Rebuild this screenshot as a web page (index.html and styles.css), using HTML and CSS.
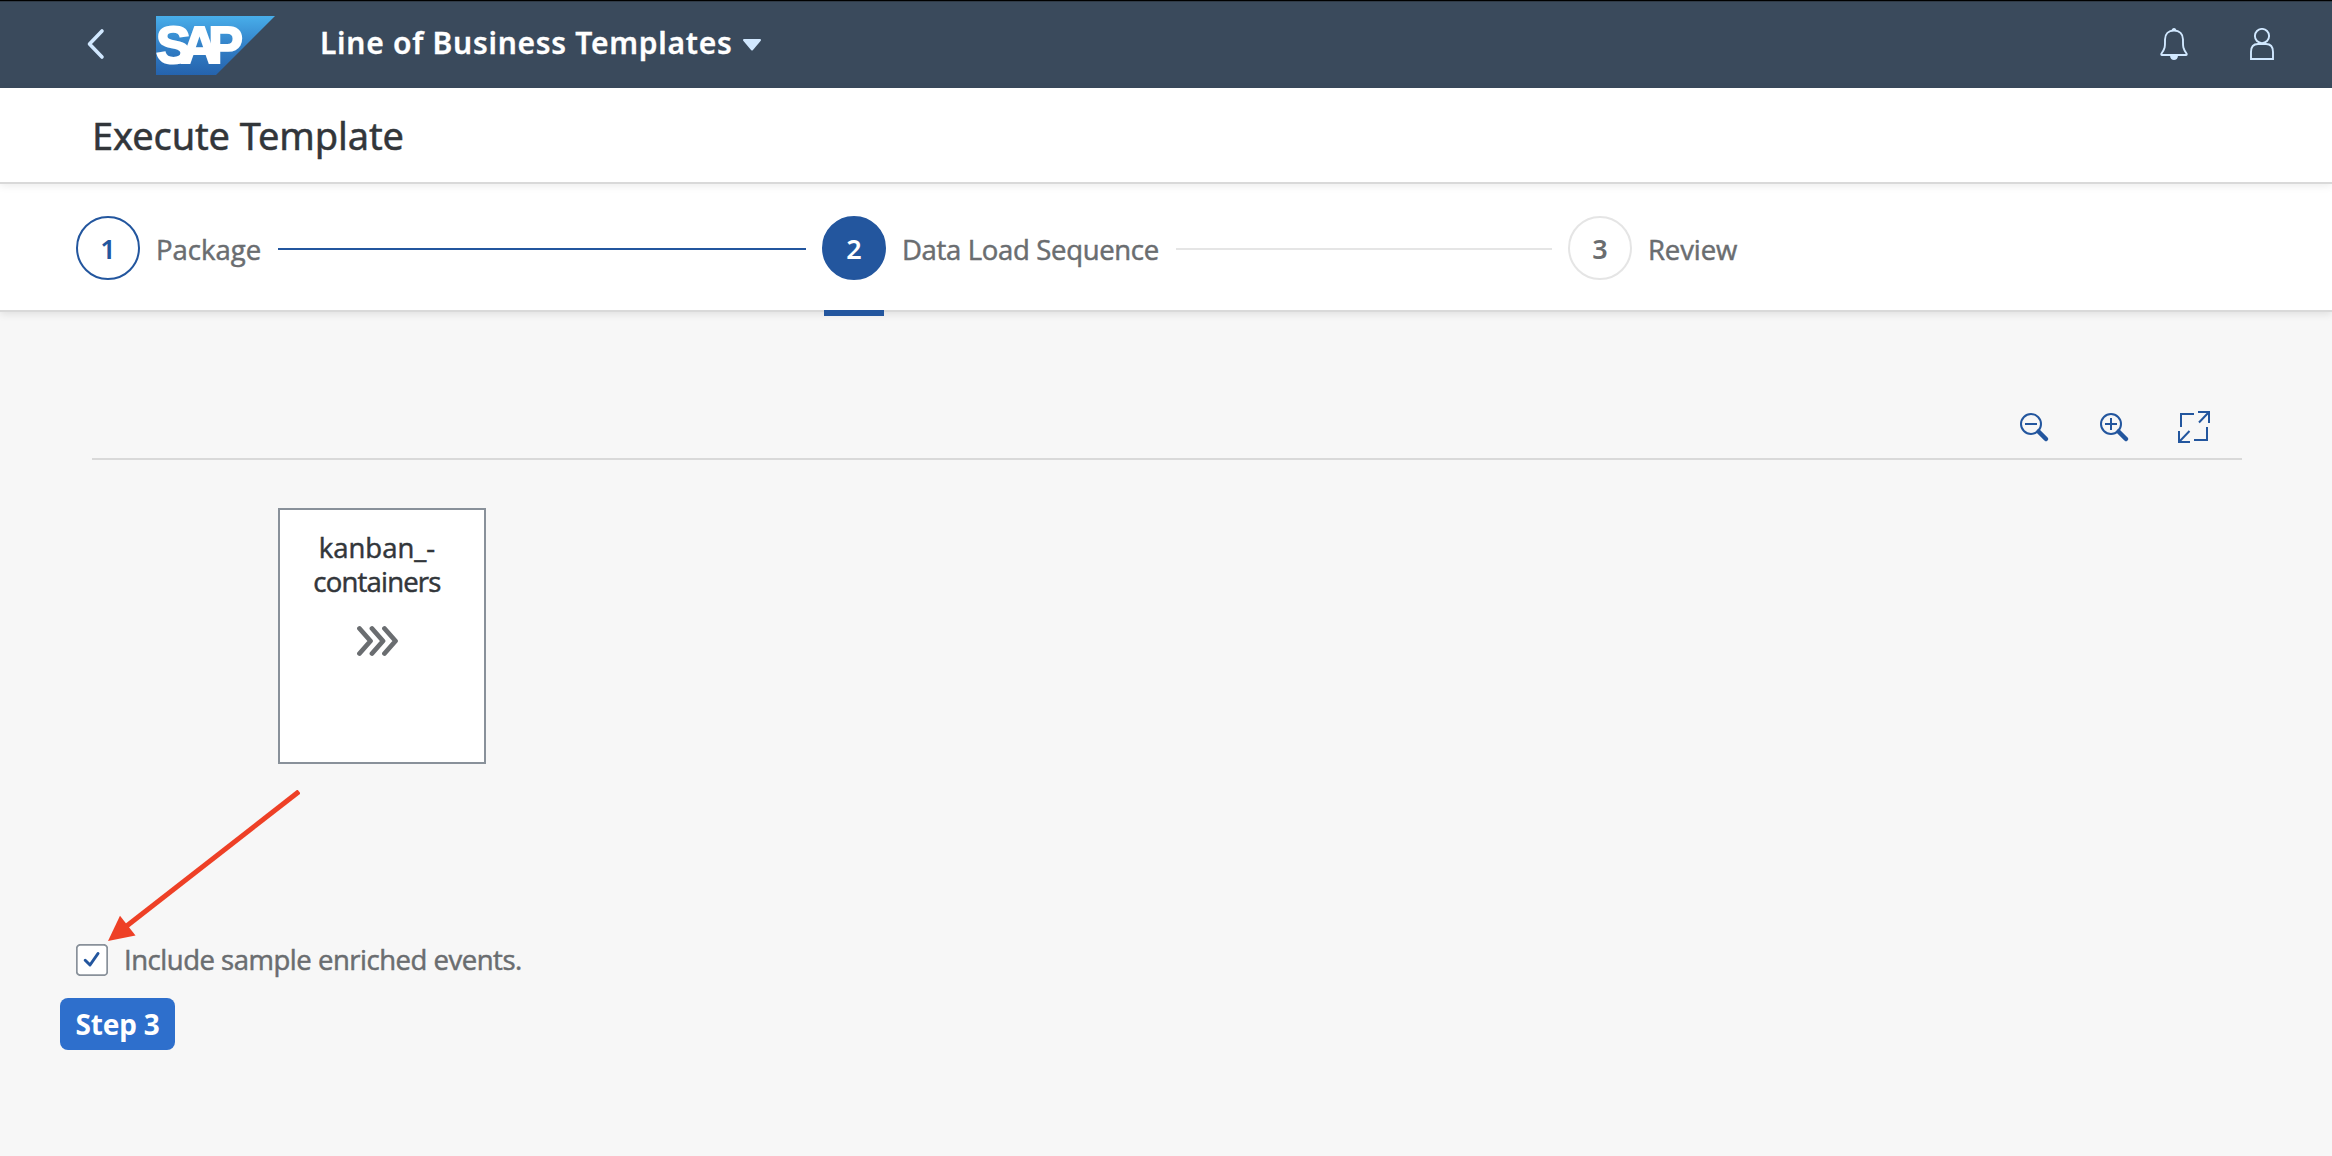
FILE: index.html
```
<!DOCTYPE html>
<html lang="en">
<head>
<meta charset="utf-8">
<title>Line of Business Templates</title>
<link rel="stylesheet" href="styles.css">
</head>
<body>
<header class="shell">
  <svg class="shell-back" width="20" height="32" viewBox="0 0 20 32"><path d="M16 3 L3.5 16 L16 29"/></svg>
  <svg class="shell-logo" width="119" height="59" viewBox="0 0 119 59">
    <defs><linearGradient id="logo" x1="0" y1="0" x2="0" y2="1"><stop offset="0" stop-color="#48aeea"/><stop offset=".5" stop-color="#3381c8"/><stop offset="1" stop-color="#2563ad"/></linearGradient></defs>
    <path d="M0 0H119L60 59H0Z" fill="url(#logo)"/>
    <text x="0" y="47" textLength="87">SAP</text>
  </svg>
  <h1 class="shell-title">Line of Business Templates</h1>
  <svg class="shell-caret" width="20" height="14" viewBox="0 0 20 14"><path d="M2 2H18L10 11.5Z"/></svg>
  <div class="shell-actions">
    <svg width="28" height="32" viewBox="0 0 28 32"><path d="M14 2.5C8.500 2.500 5 6 5 11.500C5 18 5.500 20 1.500 25.500C1 26.500 1.300 27 2 27H26C26.700 27 27 26.500 26.500 25.500C22.500 20 23 18 23 11.500C23 6 19.500 2.500 14 2.500Z"/><path class="solid" d="M10 27.500H18C18 30.500 16 32 14 32S10 30.500 10 27.500ZM11.500 3C11.500 -1 16.500 -1 16.500 3Z"/></svg>
    <svg width="24" height="32" viewBox="0 0 24 32"><circle cx="12" cy="8" r="7.100"/><path d="M1 31V24C1 18.500 4 16 8 16H16C20 16 23 18.500 23 24V31Z"/></svg>
  </div>
</header>
<div class="page-head"><h2>Execute Template</h2></div>
<nav class="wizard">
  <div class="step done"><span class="step-no">1</span><span class="step-label package">Package</span><i class="step-line"></i></div>
  <div class="step current"><span class="step-no">2</span><span class="step-label">Data Load Sequence</span><i class="step-line"></i></div>
  <div class="step"><span class="step-no">3</span><span class="step-label review">Review</span></div>
</nav>
<main class="content">
  <div class="toolbar">
    <svg width="32" height="32" viewBox="0 0 32 32"><circle cx="13" cy="13" r="10"/><path d="M7 13H19"/><path class="handle" d="M20.500 20.500L28 28"/></svg>
    <svg width="32" height="32" viewBox="0 0 32 32"><circle cx="13" cy="13" r="10"/><path d="M7 13H19M13 7V19"/><path class="handle" d="M20.500 20.500L28 28"/></svg>
    <svg width="32" height="32" viewBox="0 0 32 32"><path d="M3 16V3H16M29 16V29H16M20 1H31V12M21 11.500L31 1M1 20V31H12M11.500 20L1 31"/></svg>
  </div>
  <div class="node">
    <div class="node-title"><span>kanban_-</span><span class="tight">containers</span></div>
    <svg width="42" height="32" viewBox="0 0 42 32"><path d="M3.500 3.500L14.500 16L3.500 28.500M16 3.500L27 16L16 28.500M28.500 3.500L39.500 16L28.500 28.500"/></svg>
  </div>
  <label class="option">
    <svg width="32" height="32" viewBox="0 0 32 32"><rect x=".8" y=".8" width="30.400" height="30.400" rx="3.500"/><path d="M9.200 16.300L14 21L22 9.500"/></svg>
    <span>Include sample enriched events.</span>
  </label>
  <button class="next">Step 3</button>
</main>
<svg class="pointer" width="200" height="160" viewBox="0 0 200 160"><path class="shaft" d="M199 1.500L26 136.500"/><path class="head" d="M8 151L20 125.800L35.500 145.500Z"/></svg>
</body>
</html>
```
FILE: styles.css
```
* { box-sizing: border-box; }
body {
  margin: 0;
  min-height: 1156px;
  background: #f7f7f7;
  font: 27.5px/40px "Open Sans", "Noto Sans", sans-serif;
  color: #32363a;
}
h1, h2 { margin: 0; }
svg { display: block; flex: none; }
.shell {
  display: flex;
  align-items: center;
  height: 88px;
  padding: 0 58px 0 86px;
  border-top: 1px solid #000;
  background: #3a4a5c;
  box-shadow: inset 0 1px #2f3a46;
}
.shell-back { margin-top: -1px; fill: none; stroke: #d1e8ff; stroke-width: 3.6; stroke-linecap: round; stroke-linejoin: round; }
.shell-logo { margin: 1px 0 0 50px; }
.shell-logo text { font: 700 52px "Liberation Sans", sans-serif; fill: #fff; stroke: #fff; stroke-width: 2; }
.shell-title {
  margin: -3px 0 0 45px;
  font: 600 30px/44px "Noto Sans", sans-serif;
  letter-spacing: .72px;
  color: #fff;
  -webkit-text-stroke: .3px;
}
.shell-caret { margin-left: 10px; fill: #d1e8ff; stroke: #d1e8ff; stroke-width: 2; stroke-linejoin: round; }
.shell-actions { display: flex; gap: 62px; margin: -1px 0 0 auto; }
.shell-actions svg { fill: none; stroke: #d1e8ff; stroke-width: 1.9; }
.shell-actions .solid { fill: #d1e8ff; stroke: none; }
.page-head {
  position: relative;
  height: 96px;
  padding: 19px 92px 0;
  background: #fff;
  border-bottom: 2px solid #d9d9d9;
  box-shadow: 0 2px 8px rgba(0, 0, 0, .08);
  z-index: 2;
}
.page-head h2 { font: 400 38px/56px "Noto Sans", sans-serif; letter-spacing: -.12px; -webkit-text-stroke: .5px; }
.wizard {
  position: relative;
  display: grid;
  grid-template-columns: 746px 746px 1fr;
  height: 128px;
  padding: 0 76px;
  background: #fff;
  border-bottom: 2px solid #d9d9d9;
  box-shadow: 0 2px 8px rgba(0, 0, 0, .1);
  z-index: 1;
}
.step { position: relative; display: flex; align-items: center; padding-top: 2px; color: #6a6d70; }
.step-no {
  width: 64px;
  height: 64px;
  padding-top: 1px;
  border: 2px solid #e5e5e5;
  border-radius: 50%;
  font: 600 27px/60px "Noto Sans", sans-serif;
  text-align: center;
}
.step-label { margin: 4px 0 0 16px; letter-spacing: -.33px; -webkit-text-stroke: .5px; }
.package { letter-spacing: 0; }
.review { letter-spacing: -.1px; }
.step-line { flex: 1; height: 2px; margin: 2px 16px 0 17px; background: #e5e5e5; }
.done .step-no { border-color: #23569e; color: #23569e; }
.done .step-line { background: #23569e; }
.current .step-no { border-color: #23569e; background: #23569e; color: #fff; }
.current::after { content: ""; position: absolute; left: 2px; bottom: -6px; width: 60px; height: 6px; background: #23569e; }
.content { display: flex; flex-direction: column; align-items: flex-start; padding: 80px 90px 0 60px; }
.toolbar {
  display: flex;
  align-self: stretch;
  justify-content: flex-end;
  gap: 48px;
  height: 68px;
  margin-left: 32px;
  padding: 19px 32px 0 0;
  border-bottom: 2px solid #d9d9d9;
}
.toolbar svg { fill: none; stroke: #23569e; stroke-width: 2; }
.toolbar .handle { stroke-width: 4.500; stroke-linecap: round; }
.node {
  display: flex;
  flex-direction: column;
  align-items: center;
  width: 208px;
  height: 256px;
  margin: 48px 0 0 218px;
  padding: 21px 10px 0 0;
  border: 2px solid #89919a;
  background: #fff;
}
.node-title { display: flex; flex-direction: column; align-items: center; line-height: 34px; -webkit-text-stroke: .5px; }
.node-title .tight { letter-spacing: -.8px; }
.node svg { margin-top: 26px; fill: none; stroke: #6a6d70; stroke-width: 4.800; stroke-linecap: round; stroke-linejoin: round; }
.option { display: flex; align-items: center; gap: 16px; height: 40px; margin: 176px 0 0 16px; color: #6a6d70; letter-spacing: -.48px; -webkit-text-stroke: .5px; }
.option rect { fill: #fff; stroke: #89919a; stroke-width: 1.800; }
.option path { fill: none; stroke: #23569e; stroke-width: 3; stroke-linecap: round; stroke-linejoin: round; }
.next {
  width: 115px;
  height: 52px;
  margin-top: 18px;
  padding: 0;
  border: 0;
  border-radius: 8px;
  background: #2e6fcc;
  color: #fff;
  font: 700 28px/52px "Noto Sans", sans-serif;
  letter-spacing: -.2px;
}
.pointer { position: absolute; left: 100px; top: 790px; z-index: 3; }
.pointer .shaft { stroke: #ee4026; stroke-width: 5; }
.pointer .head { fill: #ee4026; }
```
